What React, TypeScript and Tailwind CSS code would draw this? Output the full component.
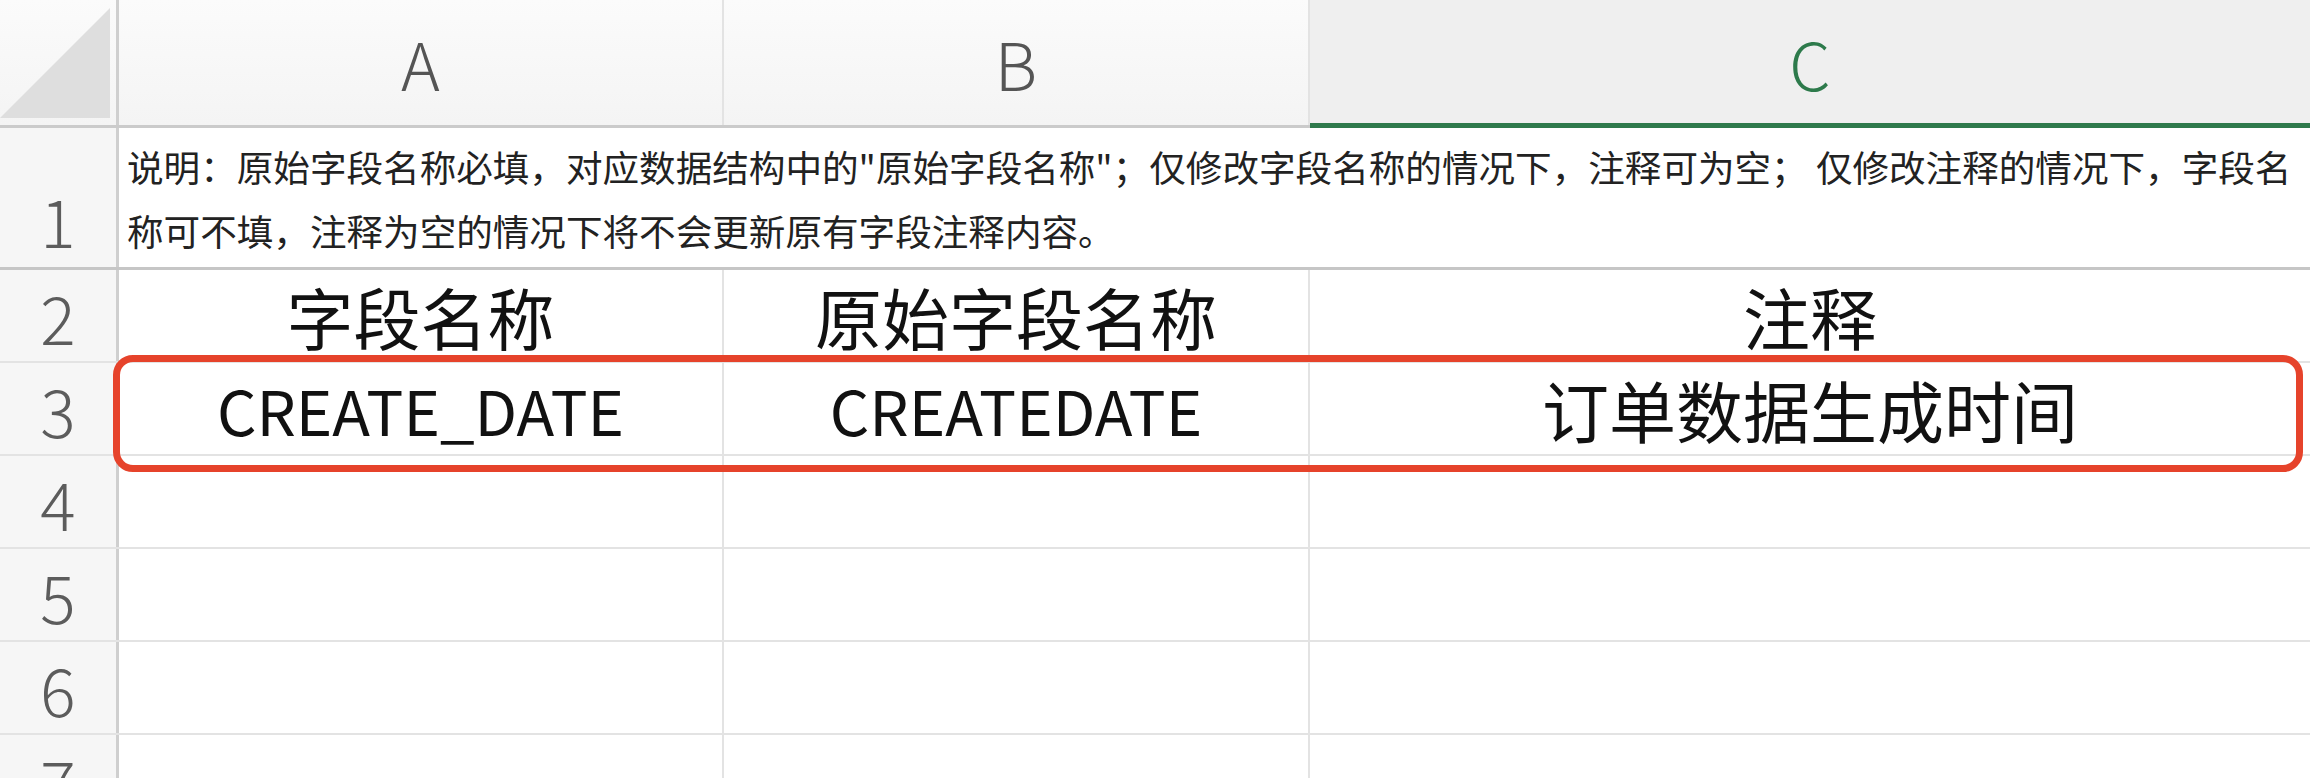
export default function App() {
  const font = "font-['Noto_Sans_CJK_SC','Noto_Sans',sans-serif]";
  const cols = "grid grid-cols-[119px_605px_586px_1000px] grid-rows-[100%]";
  const rowHead =
    "flex items-center justify-center bg-[#f6f6f6] border-r-[3px] border-[#cfcfcf] text-[66px] leading-none font-light text-[#5c5c5c]";
  const cell =
    "flex items-center justify-center border-r-2 border-[#e3e3e3] text-[67px] leading-none text-[#111] whitespace-nowrap";
  const emptyRows = [4, 5, 6, 7];
  return (
    <div className={`relative w-[2310px] h-[778px] overflow-hidden bg-white ${font}`}>
      {/* column header */}
      <div className={`${cols} h-[128px] border-b-[3px] border-[#cbcbcb] bg-gradient-to-b from-[#fbfbfb] to-[#f4f4f4]`}>
        <div className="relative border-r-[3px] border-[#cfcfcf]">
          <svg width="116" height="125" className="absolute left-0 top-0">
            <polygon points="0,118 110,8 110,118" fill="#dedede" />
          </svg>
        </div>
        <div className="flex items-center justify-center border-r-2 border-[#e3e3e3] text-[66px] font-light text-[#555]">A</div>
        <div className="flex items-center justify-center border-r-2 border-[#e3e3e3] text-[66px] font-light text-[#555]">B</div>
        <div className="relative flex items-center justify-center bg-[#efefef] text-[66px] font-light text-[#2d7a4b]">
          C
          <div className="absolute left-0 right-0 bottom-[-3px] h-[5px] bg-[#2f7a4c]" />
        </div>
      </div>

      {/* row 1 */}
      <div className={`${cols} h-[142px] border-b-[3px] border-[#c6c6c6]`}>
        <div className={`${rowHead} !items-end pb-[15px]`}>1</div>
        <div className="col-span-3 flex flex-col justify-center pl-[8px] pt-[2px] text-[36.6px] leading-[64px] text-[#222] whitespace-nowrap">
          <div>说明：原始字段名称必填，对应数据结构中的"原始字段名称"；仅修改字段名称的情况下，注释可为空； 仅修改注释的情况下，字段名</div>
          <div>称可不填，注释为空的情况下将不会更新原有字段注释内容。</div>
        </div>
      </div>

      {/* row 2 */}
      <div className={`${cols} h-[93px] border-b-2 border-[#e3e3e3]`}>
        <div className={rowHead}>2</div>
        <div className={cell}>字段名称</div>
        <div className={cell}>原始字段名称</div>
        <div className={`${cell} !border-r-0`}>注释</div>
      </div>

      {/* row 3 */}
      <div className={`${cols} h-[93px] border-b-2 border-[#e3e3e3]`}>
        <div className={rowHead}>3</div>
        <div className={`${cell} !text-[62px]`}>CREATE_DATE</div>
        <div className={`${cell} !text-[62px]`}>CREATEDATE</div>
        <div className={`${cell} !border-r-0`}>订单数据生成时间</div>
      </div>

      {emptyRows.map((n) => (
        <div key={n} className={`${cols} h-[93px] border-b-2 border-[#e3e3e3]`}>
          <div className={rowHead}>{n}</div>
          <div className={cell} />
          <div className={cell} />
          <div className={`${cell} !border-r-0`} />
        </div>
      ))}

      {/* highlight box */}
      <div className="absolute left-[113px] top-[355px] w-[2190px] h-[117px] rounded-[20px] border-[7px] border-[#e6432b]" />
    </div>
  );
}
